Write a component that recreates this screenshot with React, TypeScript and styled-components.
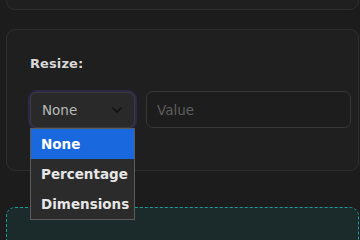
import React from 'react'
import styled, { createGlobalStyle } from 'styled-components'

const GlobalStyle = createGlobalStyle`
  html, body {
    margin: 0;
    padding: 0;
    background: #1c1c1c;
    width: 360px;
    height: 240px;
    overflow: hidden;
    font-family: 'DejaVu Sans', 'Open Sans', sans-serif;
  }
`

const Page = styled.div`
  display: flex;
  flex-direction: column;
  padding: 0 1px 0 6px;
  margin-top: -40px;
`

const Card = styled.div`
  border: 1px solid #2e2e2e;
  border-radius: 9px;
  background: #1f1f1f;
  box-sizing: border-box;
`

const TopCard = styled(Card)`
  height: 50px;
  margin-bottom: 19px;
`

const ResizeCard = styled(Card)`
  padding: 24px 7px 0 23px;
  height: 142px;
`

const Label = styled.div`
  color: #d8d8d8;
  font-size: 13px;
  font-weight: 700;
  letter-spacing: 0.1px;
  line-height: 20px;
  margin-bottom: 17px;
`

const Row = styled.div`
  display: flex;
  align-items: center;
  gap: 11px;
`

const SelectWrap = styled.div`
  position: relative;
  width: 105px;
`

const SelectBox = styled.div`
  box-sizing: border-box;
  height: 36px;
  display: flex;
  align-items: center;
  justify-content: space-between;
  padding: 0 12px 0 11px;
  background: #292929;
  border: 1px solid #3c3c3c;
  border-radius: 7px;
  box-shadow: 0 0 0 2px #2c2848;
  color: #b9b9b9;
  font-size: 13.5px;
  font-weight: 500;
`

const ValueInput = styled.div`
  box-sizing: border-box;
  flex: 0 0 205px;
  height: 37px;
  display: flex;
  align-items: center;
  padding: 0 10px;
  border: 1px solid #383838;
  border-radius: 7px;
  background: #1d1d1d;
  color: #5e5e5e;
  font-size: 13.5px;
`

const Menu = styled.div`
  position: absolute;
  top: 36px;
  left: 0;
  width: 105px;
  box-sizing: border-box;
  border: 1px solid #5c5c5c;
  background: #2b2b2b;
  z-index: 2;
`

const Option = styled.div<{ $active?: boolean }>`
  height: 30px;
  display: flex;
  align-items: center;
  padding-left: 10px;
  background: ${p => (p.$active ? '#1a68dd' : 'transparent')};
  color: ${p => (p.$active ? '#ffffff' : '#e6e6e6')};
  font-size: 13.5px;
  font-weight: 700;
  white-space: nowrap;
`

const DropCard = styled.div`
  box-sizing: border-box;
  margin-top: 36px;
  height: 33px;
  border: 1px dashed #1f9c98;
  border-bottom: none;
  border-radius: 9px 9px 0 0;
  background: #1b2b2b;
`

const Chevron = () => (
  <svg width='10' height='6' viewBox='0 0 10 6' fill='none'>
    <path d='M1 1l4 4 4-4' stroke='#111' strokeWidth='1.6' strokeLinecap='round' strokeLinejoin='round' />
  </svg>
)

const options = ['None', 'Percentage', 'Dimensions']

const App: React.FC = () => {
  return (
    <>
      <GlobalStyle />
      <Page>
        <TopCard />
        <ResizeCard>
          <Label>Resize:</Label>
          <Row>
            <SelectWrap>
              <SelectBox>
                <span>None</span>
                <Chevron />
              </SelectBox>
              <Menu>
                {options.map(o => (
                  <Option key={o} $active={o === 'None'}>{o}</Option>
                ))}
              </Menu>
            </SelectWrap>
            <ValueInput>Value</ValueInput>
          </Row>
        </ResizeCard>
        <DropCard />
      </Page>
    </>
  )
}

export default App
